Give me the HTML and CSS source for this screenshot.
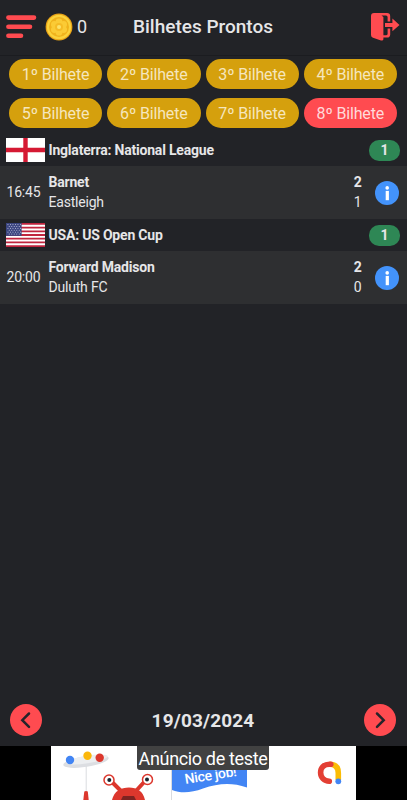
FILE: index.html
```html
<!DOCTYPE html>
<html lang="pt-BR">
<head>
    <meta charset="UTF-8">
    <meta name="viewport" content="width=device-width, initial-scale=1.0">
    <title>Bilhetes Prontos</title>
    <link rel="stylesheet" href="styles.css">
</head>
<body>
    <header class="topbar">
        <div class="topbar-left">
            <svg class="menu-icon" width="31" height="24" viewBox="0 0 31 24">
                <path d="M2.4 2.6H28M2.4 11.7H24M2.4 20.7H15" stroke="#ff4b50" stroke-width="4.6" stroke-linecap="round"/>
            </svg>
            <svg class="coin" width="28" height="28" viewBox="0 0 28 28">
                <circle cx="14" cy="14" r="13.4" fill="#e8a317"/>
                <circle cx="14" cy="14" r="12.2" fill="#fbd23c"/>
                <circle cx="14" cy="14" r="10" fill="#f0b21c"/>
                <g fill="#fbcb35">
                    <circle cx="14" cy="8.8" r="3.4"/>
                    <circle cx="18.6" cy="11.4" r="3.4"/>
                    <circle cx="18.6" cy="16.6" r="3.4"/>
                    <circle cx="14" cy="19.2" r="3.4"/>
                    <circle cx="9.4" cy="16.6" r="3.4"/>
                    <circle cx="9.4" cy="11.4" r="3.4"/>
                </g>
                <circle cx="14" cy="14" r="4" fill="#f5bb25"/>
                <circle cx="14" cy="14" r="2" fill="#fde36a"/>
            </svg>
            <span class="coins">0</span>
        </div>
        <h1 class="title">Bilhetes Prontos</h1>
        <svg class="exit-icon" width="30" height="30" viewBox="0 0 30 30">
            <path d="M4 1H17Q20.2 1 20.2 4.2V9.5H17.6V5.2Q17.6 3.6 16 3.6H11.5L13.4 5V23.3H16Q17.6 23.3 17.6 21.7V16.5H20.2V22.5Q20.2 25.6 17 25.6H13.4V27.2Q13.2 29 11 28.4L3 25.8Q1 25.2 1 23V4Q1 1 4 1Z" fill="#ff4b50"/>
            <path d="M15 10.9H22.4V6.6L29.5 12.9L22.4 19.2V15H15Z" fill="#ff4b50"/>
        </svg>
    </header>

    <nav class="tickets">
        <button class="ticket">1º Bilhete</button>
        <button class="ticket">2º Bilhete</button>
        <button class="ticket">3º Bilhete</button>
        <button class="ticket">4º Bilhete</button>
        <button class="ticket">5º Bilhete</button>
        <button class="ticket">6º Bilhete</button>
        <button class="ticket">7º Bilhete</button>
        <button class="ticket active">8º Bilhete</button>
    </nav>

    <main class="games">
        <div class="league">
            <svg class="flag" width="39" height="24" viewBox="0 0 39 24">
                <rect width="39" height="24" fill="#fff"/>
                <path d="M19.5 0V24M0 12H39" stroke="#d51933" stroke-width="4.4"/>
            </svg>
            <span class="league-name">Inglaterra: National League</span>
            <span class="count">1</span>
        </div>
        <div class="match">
            <span class="time">16:45</span>
            <div class="teams">
                <div class="team winner"><span>Barnet</span><span>2</span></div>
                <div class="team"><span>Eastleigh</span><span>1</span></div>
            </div>
            <svg class="info" width="24" height="24" viewBox="0 0 24 24">
                <circle cx="12" cy="12" r="12" fill="#4393fb"/>
                <circle cx="12.2" cy="6.9" r="1.8" fill="#fff"/>
                <path d="M10.7 9.9H13.9V19.2H10.7Z" fill="#fff"/>
            </svg>
        </div>
        <div class="league">
            <svg class="flag" width="39" height="24" viewBox="0 0 39 24">
                <rect width="39" height="24" fill="#fff"/>
                <path d="M0 .92H39M0 4.62H39M0 8.31H39M0 12H39M0 15.69H39M0 19.38H39M0 23.08H39" stroke="#c0253f" stroke-width="1.85"/>
                <rect width="15.6" height="12.9" fill="#3b4580"/>
                <path d="M1.5 1.6H15M2.8 3.5H14M1.5 5.4H15M2.8 7.3H14M1.5 9.2H15M2.8 11.1H14" stroke="#c6cbe0" stroke-width=".9" stroke-dasharray=".9 1.6"/>
            </svg>
            <span class="league-name">USA: US Open Cup</span>
            <span class="count">1</span>
        </div>
        <div class="match">
            <span class="time">20:00</span>
            <div class="teams">
                <div class="team winner"><span>Forward Madison</span><span>2</span></div>
                <div class="team"><span>Duluth FC</span><span>0</span></div>
            </div>
            <svg class="info" width="24" height="24" viewBox="0 0 24 24">
                <circle cx="12" cy="12" r="12" fill="#4393fb"/>
                <circle cx="12.2" cy="6.9" r="1.8" fill="#fff"/>
                <path d="M10.7 9.9H13.9V19.2H10.7Z" fill="#fff"/>
            </svg>
        </div>
    </main>

    <div class="date-nav">
        <button class="round-btn">
            <svg width="32" height="32" viewBox="0 0 32 32"><path d="M19 9.5L12.3 16.2L19 22.9" fill="none" stroke="#26242a" stroke-width="2.5" stroke-linecap="round"/></svg>
        </button>
        <span class="date">19/03/2024</span>
        <button class="round-btn">
            <svg width="32" height="32" viewBox="0 0 32 32"><path d="M13 9.5L19.7 16.2L13 22.9" fill="none" stroke="#26242a" stroke-width="2.5" stroke-linecap="round"/></svg>
        </button>
    </div>

    <footer class="ad">
        <div class="banner">
            <svg width="305" height="54" viewBox="0 0 305 54">
                <!-- plate with balls -->
                <ellipse cx="35" cy="15.5" rx="23" ry="5.4" fill="#dcdee2" transform="rotate(-9 35 15.5)"/>
                <ellipse cx="36" cy="13.5" rx="21" ry="3.8" fill="#eceef0" transform="rotate(-9 36 13.5)"/>
                <path d="M35.2 20V46" stroke="#dadce0" stroke-width="1"/>
                <circle cx="19" cy="14" r="4.2" fill="#4285f4"/>
                <circle cx="36.5" cy="9.7" r="4.2" fill="#fbb70b"/>
                <circle cx="48.7" cy="11.7" r="4.2" fill="#dc372d"/>
                <path d="M33.3 45.5Q35 44.5 36.8 45.5L37.7 54H32.3Z" fill="#dc372d"/>
                <!-- crab -->
                <path d="M59 34L71 46M95 34L84 46" stroke="#dc372d" stroke-width="4"/>
                <path d="M61 54C63 45 70 41.5 78 41.5S92 45 94 54Z" fill="#dc372d"/>
                <path d="M70 54L72 50H83L85 54Z" fill="#7d2321"/>
                <circle cx="58" cy="34" r="5" fill="#fff" stroke="#dc372d" stroke-width="1.5"/>
                <circle cx="96.5" cy="33.5" r="5" fill="#fff" stroke="#dc372d" stroke-width="1.5"/>
                <circle cx="58.3" cy="34" r="2" fill="#18252e"/>
                <circle cx="96" cy="33.5" r="2" fill="#18252e"/>
                <!-- flag -->
                <path d="M120.5 20V54" stroke="#dadce0" stroke-width="1"/>
                <path d="M121 22H196V41.5C180 36 167 37.5 152 42.5C140 47 130 47.5 121 44Z" fill="#4285f4"/>
                <text class="nice" x="134.5" y="38" transform="rotate(-9 134.5 38)">Nice job!</text>
                <!-- admob mark -->
                <path d="M278.5 18.3C284.5 18.3 287.3 21.5 287.3 27V34" fill="none" stroke="#fbbc04" stroke-width="5.6"/>
                <path d="M279.8 18.3H278.5C272.5 18.3 269.6 22 269.6 26.6S273 35.2 278.3 35.2" fill="none" stroke="#e33f34" stroke-width="5.6" stroke-linecap="round"/>
                <circle cx="287.3" cy="35.3" r="2.9" fill="#4285f4"/>
            </svg>
            <span class="ad-label">Anúncio de teste</span>
        </div>
    </footer>
</body>
</html>
```

FILE: styles.css
```css
* {
    box-sizing: border-box;
}
body {
    margin: 0;
    height: 800px;
    display: flex;
    flex-direction: column;
    overflow: hidden;
    background: #222327;
    color: #e6e6e8;
    font-family: Roboto, "Liberation Sans", sans-serif;
}
button {
    border: none;
    padding: 0;
    font-family: inherit;
}
svg {
    display: block;
    flex: none;
}
.topbar {
    height: 56px;
    padding: 0 7px 2px 6px;
    display: grid;
    grid-template-columns: 1fr auto 1fr;
    align-items: center;
    border-bottom: 1px solid #1b1c20;
}
.topbar-left {
    display: flex;
    align-items: center;
}
.coin {
    margin-left: 8px;
}
.coins {
    margin-left: 4px;
    font-size: 18px;
}
.title {
    margin: 0;
    font-size: 19px;
    font-weight: 500;
}
.exit-icon {
    justify-self: end;
}
.tickets {
    height: 78px;
    padding: 3px 10px 0 9px;
    display: grid;
    grid-template-columns: repeat(4, 1fr);
    grid-auto-rows: 30px;
    gap: 9px 5px;
}
.ticket {
    border-radius: 15px;
    background: #d5a00d;
    color: #f5e6bd;
    font-size: 16px;
    letter-spacing: -.15px;
}
.ticket.active {
    background: #ff4b50;
    color: #ffd9da;
}
.league {
    height: 32px;
    padding: 0 7px 0 6px;
    display: flex;
    align-items: center;
}
.league-name {
    flex: 1;
    margin-left: 3.5px;
    font-size: 14px;
    font-weight: 700;
    letter-spacing: -.2px;
}
.count {
    width: 31px;
    height: 21px;
    border-radius: 10px;
    background: #2e8755;
    font-size: 14px;
    font-weight: 700;
    line-height: 21px;
    text-align: center;
}
.match {
    height: 53px;
    padding: 0 8px 0 6.5px;
    display: flex;
    align-items: center;
    background: #2e2f31;
}
.time {
    width: 42px;
    padding-bottom: 1px;
    font-size: 14px;
    letter-spacing: -.2px;
}
.teams {
    flex: 1;
    margin-right: 13.5px;
    padding-bottom: 1px;
}
.team {
    display: flex;
    justify-content: space-between;
    font-size: 14px;
    line-height: 20px;
    letter-spacing: -.2px;
}
.winner {
    font-weight: 700;
}
.date-nav {
    height: 52px;
    margin-top: auto;
    padding: 0 11px 0 10px;
    display: flex;
    align-items: center;
    justify-content: space-between;
}
.round-btn {
    width: 32px;
    height: 32px;
    border-radius: 50%;
    background: #ff4b50;
}
.date {
    font-size: 19px;
    font-weight: 700;
    letter-spacing: .15px;
}
.ad {
    height: 54px;
    display: flex;
    justify-content: center;
    background: #000;
}
.banner {
    position: relative;
    width: 305px;
    background: #fff;
}
.ad-label {
    position: absolute;
    top: 0;
    left: 86px;
    width: 132px;
    height: 24px;
    border-radius: 0 0 3px 3px;
    background: #414141;
    color: #fff;
    font-size: 18px;
    line-height: 26px;
    letter-spacing: -.35px;
    text-align: center;
    white-space: nowrap;
}
.nice {
    fill: #fff;
    font-size: 14px;
    font-weight: 500;
    letter-spacing: -.3px;
}
```
